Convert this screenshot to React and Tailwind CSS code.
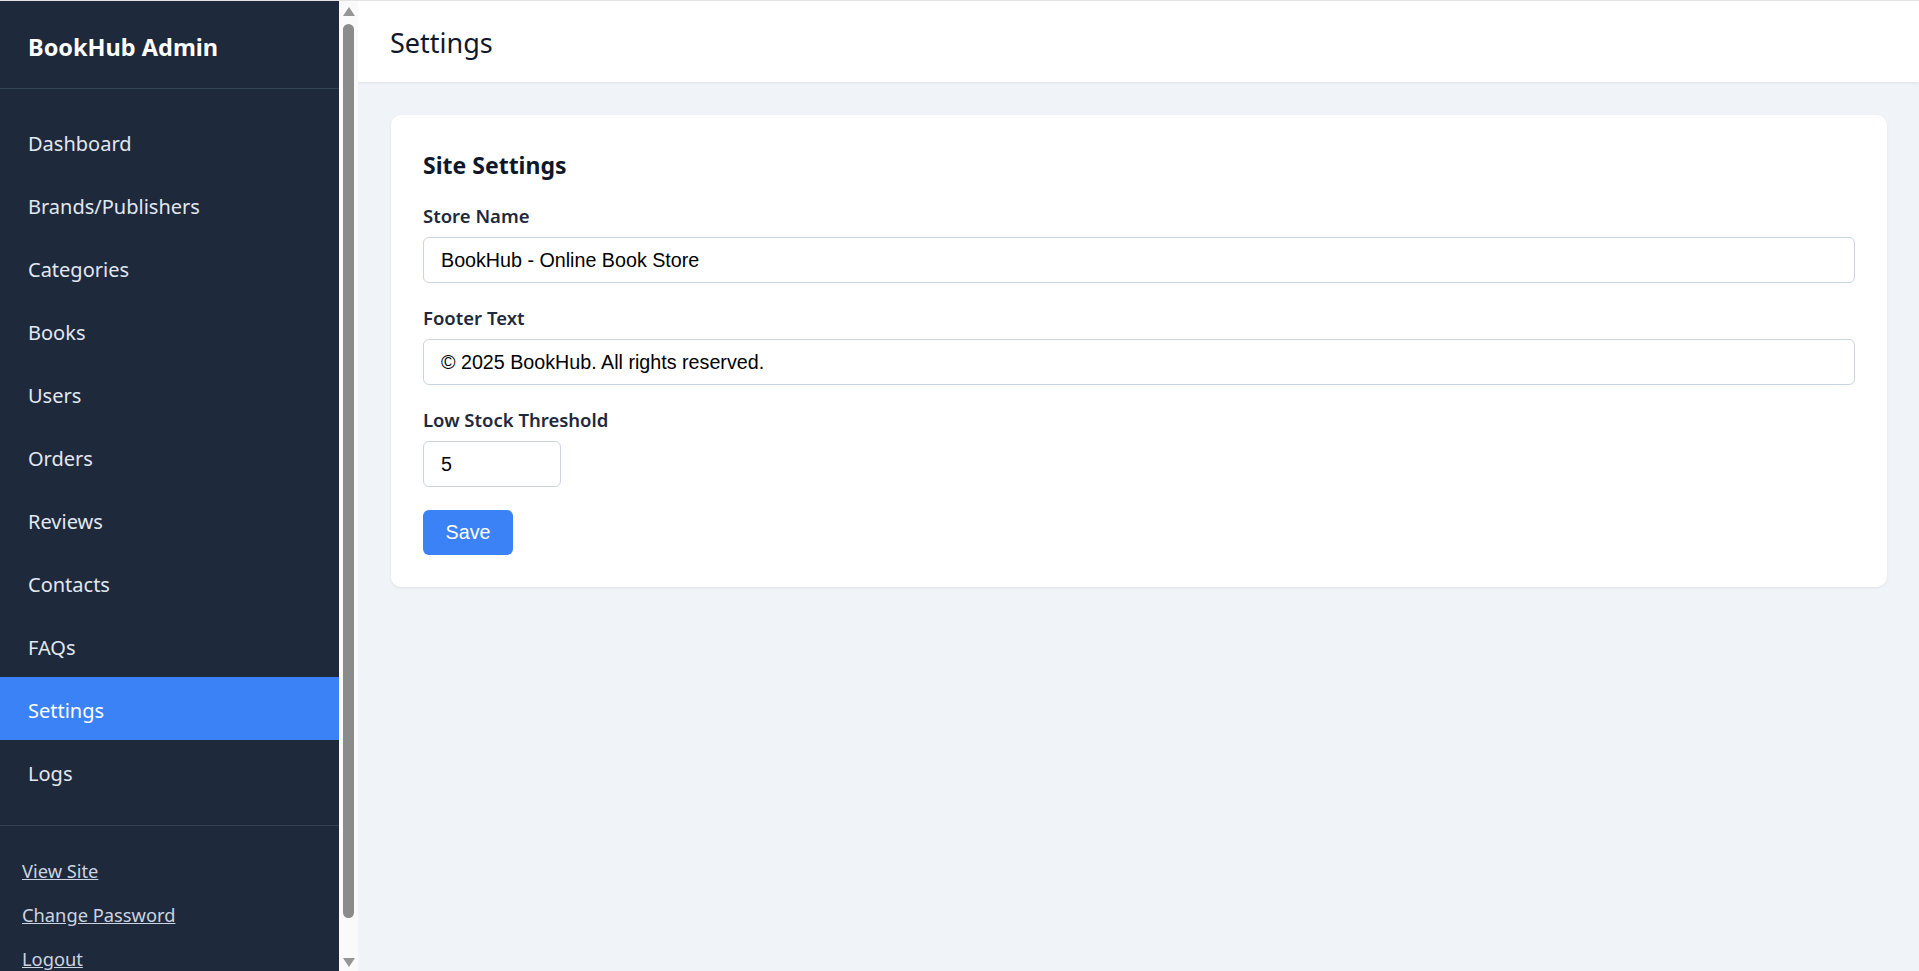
import { useState } from "react";

const NAV = [
  "Dashboard",
  "Brands/Publishers",
  "Categories",
  "Books",
  "Users",
  "Orders",
  "Reviews",
  "Contacts",
  "FAQs",
  "Settings",
  "Logs",
];

const LINKS = ["View Site", "Change Password", "Logout"];

// the sidebar's own scroll track, drawn since the browser hides native bars
function ScrollTrack() {
  return (
    <div className="w-[19px] shrink-0 h-full bg-[#fafafa] flex flex-col items-center">
      <svg width="12" height="9" viewBox="0 0 12 9" className="mt-[6px]">
        <path d="M6 0 L12 9 L0 9 Z" fill="#969696" />
      </svg>
      <div className="mt-[8px] w-[11px] h-[894px] rounded-full bg-[#8b8b8b]" />
      <div className="flex-1" />
      <svg width="12" height="9" viewBox="0 0 12 9" className="mb-[4px]">
        <path d="M0 0 L12 0 L6 9 Z" fill="#969696" />
      </svg>
    </div>
  );
}

function Sidebar({ active }) {
  return (
    <aside className="shrink-0 h-full flex">
      <div className="w-[339px] h-full overflow-hidden bg-[#1e293b]">
        <div className="h-[88px] flex items-center px-7 pt-[6px] border-b border-[#334155]">
          <span className="text-white font-bold text-[23.5px]">BookHub Admin</span>
        </div>
        <nav className="pt-[21px] pb-[22px]">
          {NAV.map((item) => (
            <a
              key={item}
              href="#"
              className={`flex items-center h-[63px] px-7 pt-[4px] text-[20px] ${
                item === active ? "bg-[#3b82f6] text-white" : "text-[#e2e8f0]"
              }`}
            >
              {item}
            </a>
          ))}
        </nav>
        <div className="border-t border-[#334155] px-[22px] pt-[32px] pb-[32px] flex flex-col gap-[18px]">
          {LINKS.map((l) => (
            <a key={l} href="#" className="text-[18.3px] leading-[26px] text-[#cbd5e1] underline self-start">
              {l}
            </a>
          ))}
        </div>
      </div>
      <ScrollTrack />
    </aside>
  );
}

function Field({ label, children, className = "" }) {
  return (
    <div className={className}>
      <label className="block text-[18.5px] leading-[26px] font-semibold text-[#1e293b] mb-2">{label}</label>
      {children}
    </div>
  );
}

const arial = { fontFamily: '"Liberation Sans", Arial, sans-serif' };

const inputCls =
  "h-[46px] rounded-[6px] border border-[#cbd5e1] bg-white px-[17px] text-[19.7px] text-black outline-none";

export default function App() {
  const [storeName, setStoreName] = useState("BookHub - Online Book Store");
  const [footer, setFooter] = useState("© 2025 BookHub. All rights reserved.");
  const [threshold, setThreshold] = useState("5");

  return (
    <div
      className="h-screen flex border-t border-[#e3e3e3] overflow-hidden"
      style={{ fontFamily: '"Noto Sans", sans-serif' }}
    >
      <Sidebar active="Settings" />
      <main className="flex-1 h-full overflow-auto bg-[#f0f3f8]">
        <header className="h-[81px] bg-white flex items-center px-8 pt-[3px] shadow-[0_1px_3px_rgba(15,23,42,0.08)]">
          <h1 className="text-[27px] text-[#0f172a]">Settings</h1>
        </header>
        <div className="pl-[33px] pr-8 pt-[33px]">
          <section className="bg-white rounded-[10px] p-8 shadow-[0_1px_3px_rgba(15,23,42,0.08)]">
            <h2 className="text-[23px] leading-[36px] font-bold text-[#0f172a]">Site Settings</h2>
            <Field label="Store Name" className="mt-[20px]">
              <input
                value={storeName}
                onChange={(e) => setStoreName(e.target.value)}
                className={`${inputCls} w-full`}
                style={arial}
              />
            </Field>
            <Field label="Footer Text" className="mt-[22px]">
              <input
                value={footer}
                onChange={(e) => setFooter(e.target.value)}
                className={`${inputCls} w-full`}
                style={arial}
              />
            </Field>
            <Field label="Low Stock Threshold" className="mt-[22px]">
              <input
                type="number"
                value={threshold}
                onChange={(e) => setThreshold(e.target.value)}
                className={`${inputCls} w-[138px] block`}
                style={arial}
              />
            </Field>
            <button
              className="mt-[23px] h-[45px] w-[90px] rounded-[6px] bg-[#3b82f6] text-white text-[19.7px]"
              style={arial}
            >
              Save
            </button>
          </section>
        </div>
      </main>
    </div>
  );
}
